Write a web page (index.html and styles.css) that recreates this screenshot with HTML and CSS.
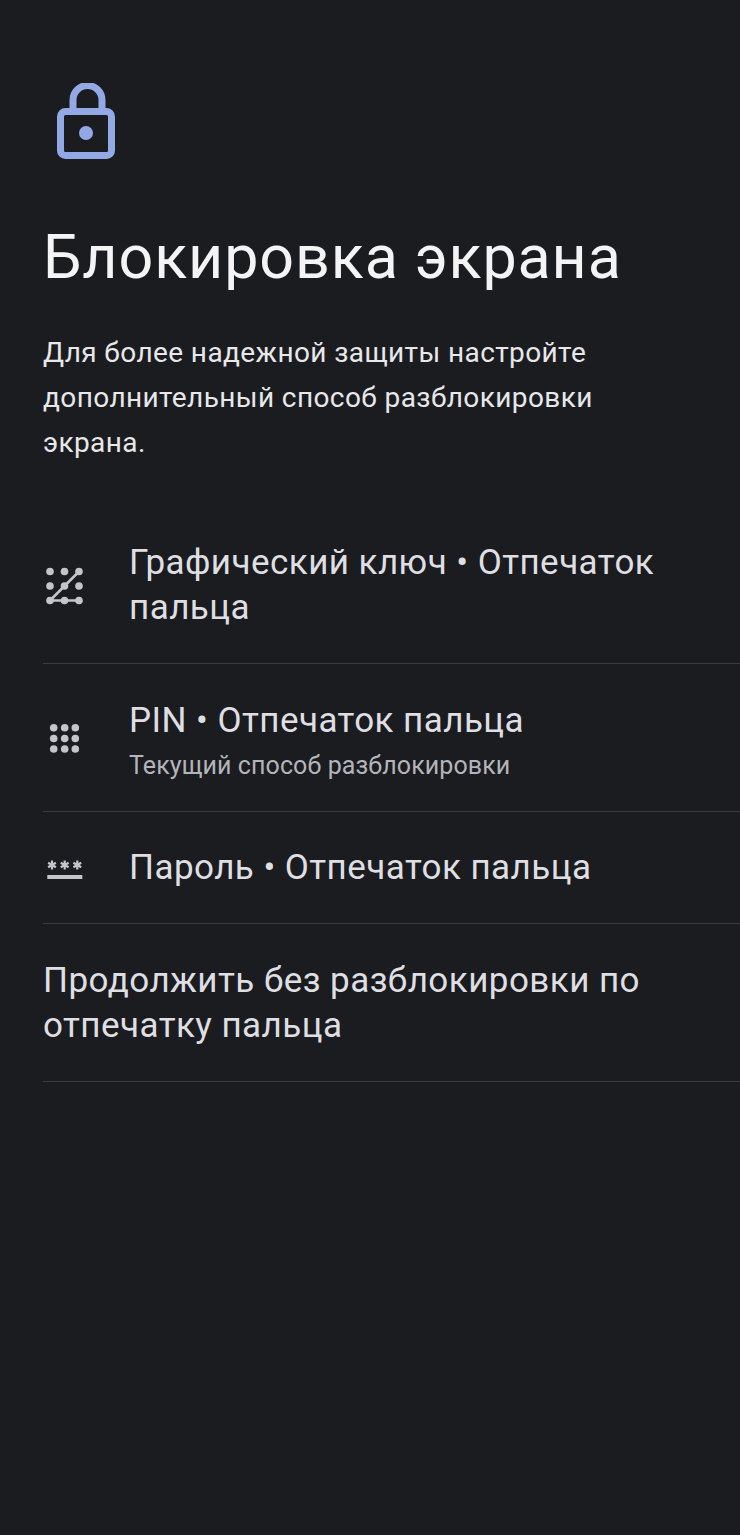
FILE: index.html
```html
<!DOCTYPE html>
<html lang="ru">
<head>
    <meta charset="UTF-8">
    <meta name="viewport" content="width=device-width, initial-scale=1.0">
    <title>Блокировка экрана</title>
    <link rel="stylesheet" href="styles.css">
</head>
<body>
    <div class="screen">
        <svg class="lock" width="60" height="78" viewBox="0 0 60 78" fill="none">
            <path d="M16 27V17a14.5 14.5 0 0 1 29 0v10" stroke="#92a9e6" stroke-width="7"/>
            <rect x="3.5" y="28.5" width="51" height="44" rx="5" stroke="#92a9e6" stroke-width="7"/>
            <circle cx="29" cy="50" r="7" fill="#92a9e6"/>
        </svg>
        <h1>Блокировка экрана</h1>
        <p class="intro">Для более надежной защиты настройте дополнительный способ разблокировки экрана.</p>

        <div class="list">
            <div class="row">
                <svg class="icon" width="44" height="44" viewBox="0 0 44 44">
                    <path d="M7 37.5L36 8.5M7 37.5H36" stroke="#c4c5ca" stroke-width="2.5" fill="none"/>
                    <g fill="#c4c5ca">
                        <circle cx="7" cy="8.5" r="3.8"/><circle cx="21.5" cy="8.5" r="3.8"/><circle cx="36" cy="8.5" r="3.8"/>
                        <circle cx="7" cy="23" r="3.8"/><circle cx="21.5" cy="23" r="3.8"/><circle cx="36" cy="23" r="3.8"/>
                        <circle cx="7" cy="37.5" r="3.8"/><circle cx="21.5" cy="37.5" r="3.8"/><circle cx="36" cy="37.5" r="3.8"/>
                    </g>
                </svg>
                <div class="row-text">
                    <div class="row-title">Графический ключ • Отпечаток пальца</div>
                </div>
            </div>
            <div class="row">
                <svg class="icon" width="44" height="44" viewBox="0 0 44 44" fill="#c4c5ca">
                    <circle cx="10.7" cy="11.7" r="3.8"/><circle cx="21.7" cy="11.7" r="3.8"/><circle cx="32.3" cy="11.7" r="3.8"/>
                    <circle cx="10.7" cy="22.5" r="3.8"/><circle cx="21.7" cy="22.5" r="3.8"/><circle cx="32.3" cy="22.5" r="3.8"/>
                    <circle cx="10.7" cy="33" r="3.8"/><circle cx="21.7" cy="33" r="3.8"/><circle cx="32.3" cy="33" r="3.8"/>
                </svg>
                <div class="row-text">
                    <div class="row-title with-sub">PIN • Отпечаток пальца</div>
                    <div class="row-sub">Текущий способ разблокировки</div>
                </div>
            </div>
            <div class="row">
                <svg class="icon" width="44" height="44" viewBox="0 0 44 44" fill="#c4c5ca">
                    <path d="M9 14.5v9M5.1 16.7l7.8 4.6M12.9 16.7l-7.8 4.6" stroke="#c4c5ca" stroke-width="2.2"/>
                    <path d="M21.7 14.5v9M17.8 16.7l7.8 4.6M25.6 16.7l-7.8 4.6" stroke="#c4c5ca" stroke-width="2.2"/>
                    <path d="M34.3 14.5v9M30.4 16.7l7.8 4.6M38.2 16.7l-7.8 4.6" stroke="#c4c5ca" stroke-width="2.2"/>
                    <rect x="4.3" y="29" width="35" height="4"/>
                </svg>
                <div class="row-text">
                    <div class="row-title">Пароль • Отпечаток пальца</div>
                </div>
            </div>
            <div class="row row-last">
                <div class="row-text">
                    <div class="row-title">Продолжить без разблокировки по отпечатку пальца</div>
                </div>
            </div>
        </div>
    </div>
</body>
</html>
```

FILE: styles.css
```css
html, body {
    margin: 0;
    padding: 0;
}

body {
    background-color: #1b1c20;
    color: #e4e4e8;
    font-family: 'Roboto', sans-serif;
}

.screen {
    height: 1535px;
    padding: 83px 0 0 43px;
    box-sizing: border-box;
    overflow: hidden;
}

.lock {
    display: block;
    margin-left: 14px;
}

h1 {
    margin: 56px 0 0;
    font-size: 61px;
    line-height: 80px;
    font-weight: 400;
    letter-spacing: 0.9px;
    color: #f4f4f6;
}

.intro {
    width: 600px;
    margin: 33px 0 0;
    font-size: 28px;
    line-height: 45px;
    letter-spacing: 0.4px;
    color: #e8e8ea;
}

.list {
    margin-top: 42px;
}

.row {
    display: flex;
    align-items: center;
    padding: 33px 0 33px;
    border-bottom: 1px solid #3a3b3f;
}

.row-last {
    padding-top: 34px;
}

.icon {
    flex: none;
    width: 44px;
    height: 44px;
    margin-right: 42px;
}

.row-text {
    width: 610px;
}

.row-title {
    font-size: 35px;
    line-height: 45px;
    letter-spacing: 0.45px;
    color: #dfdfe3;
}

.row-title.with-sub {
    line-height: 47px;
}

.row-sub {
    margin-top: 10px;
    font-size: 25px;
    line-height: 24px;
    letter-spacing: 0.1px;
    color: #b4b5ba;
}
```
